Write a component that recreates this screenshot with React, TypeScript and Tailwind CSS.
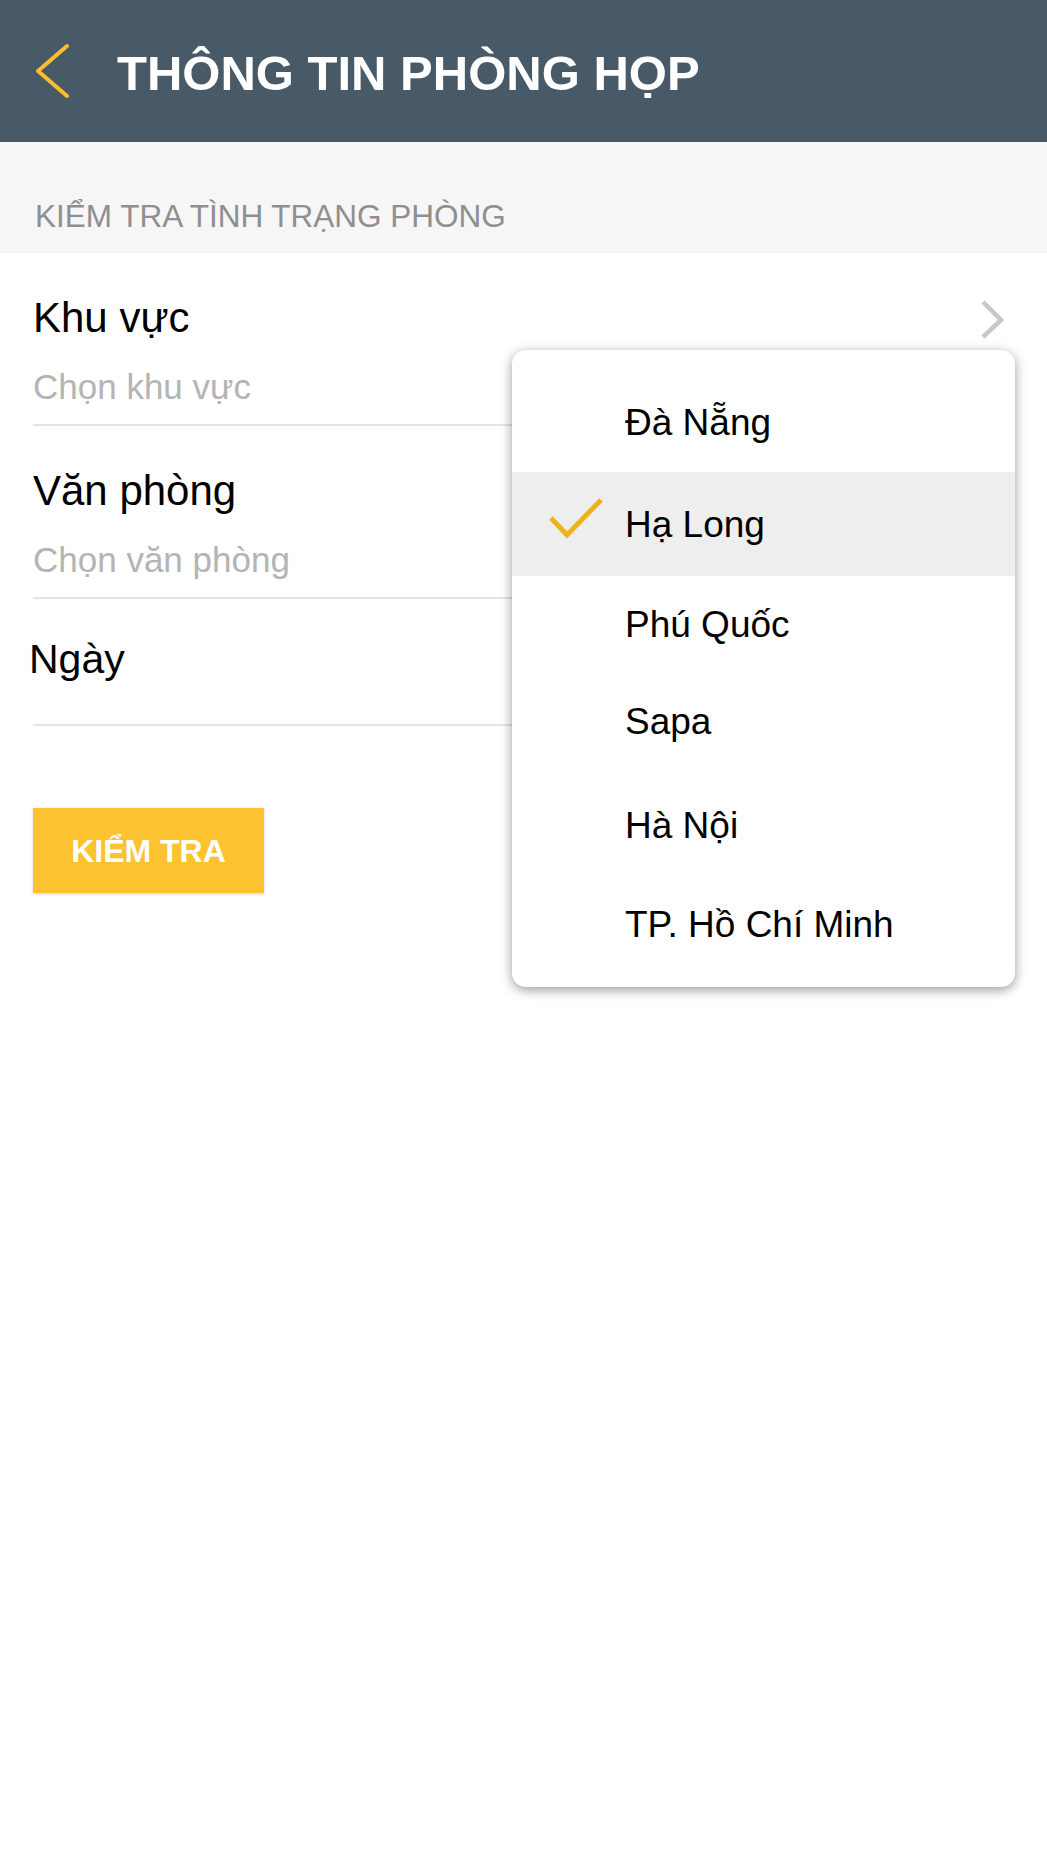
import React from 'react';

const cities = ['Đà Nẵng', 'Hạ Long', 'Phú Quốc', 'Sapa', 'Hà Nội', 'TP. Hồ Chí Minh'];
// row heights measured from the screen, the selected one is a bit taller
const rowHeights = ['h-[100px]', 'h-[104px]', 'h-[96px]', 'h-[98px]', 'h-[110px]', 'h-[88px]'];

const ChevronRight = () => (
  <svg width="24" height="48" viewBox="0 0 24 48" className="mr-[10px] shrink-0">
    <polyline points="3,8 21,26 3,43" fill="none" stroke="#c7c7cc" strokeWidth="4.5" />
  </svg>
);

const Field = ({ label, placeholder }: { label: string; placeholder: string }) => (
  <div className="mx-[33px] pt-[41px] pb-[15px] border-b-2 border-[#e4e4e4] flex justify-between items-start">
    <div>
      <p className="text-[42px] leading-[48px] text-black">{label}</p>
      <p className="mt-[23px] text-[35px] leading-[44px] text-[#b4b4b4]">{placeholder}</p>
    </div>
    <ChevronRight />
  </div>
);

const App = () => {
  const selected = 1;

  return (
    <div className="relative min-h-[1856px] bg-white font-['Liberation_Sans',Arial,sans-serif]">
      {/* Header */}
      <header className="h-[142px] bg-[#485a68] flex items-center pl-[36px]">
        <svg width="34" height="56" viewBox="0 0 34 56" className="shrink-0">
          <polyline
            points="31,3 2,28 31,53"
            fill="none"
            stroke="#fcbf2c"
            strokeWidth="4"
            strokeLinecap="round"
            strokeLinejoin="round"
          />
        </svg>
        <h1 className="ml-[47px] mt-[5px] text-[49px] leading-none font-bold text-white">
          THÔNG TIN PHÒNG HỌP
        </h1>
      </header>

      {/* Section title */}
      <div className="h-[111px] bg-[#f6f6f6] flex items-end pl-[35px] pb-[19px]">
        <p className="text-[31.5px] leading-[36px] text-[#8f8f8f]">KIỂM TRA TÌNH TRẠNG PHÒNG</p>
      </div>

      {/* Form */}
      <Field label="Khu vực" placeholder="Chọn khu vực" />
      <Field label="Văn phòng" placeholder="Chọn văn phòng" />
      <div className="mx-[33px] pt-[36px] pb-[41px] border-b-2 border-[#e4e4e4]">
        <p className="-ml-[4px] text-[41px] leading-[48px] text-black">Ngày</p>
      </div>

      <button className="mt-[82px] ml-[33px] w-[231px] h-[85px] bg-[#fdc22f] shadow-[0_1px_3px_rgba(0,0,0,0.18)] flex items-center justify-center text-white text-[32px] leading-none font-bold">
        KIỂM TRA
      </button>

      {/* Dropdown menu */}
      <div className="absolute left-[512px] top-[350px] w-[503px] rounded-[14px] bg-white pt-[22px] pb-[19px] overflow-hidden shadow-[0_3px_12px_rgba(0,0,0,0.4)]">
        {cities.map((city, i) => (
          <div
            key={city}
            className={`${rowHeights[i]} flex items-center pl-[38px] ${i === selected ? 'bg-[#eeeeee]' : ''}`}
          >
            <div className="w-[75px] shrink-0 flex items-center">
              {i === selected && (
                <svg width="52" height="52" viewBox="0 0 52 52" className="overflow-visible">
                  <polyline points="1,20 17,37 51,2" fill="none" stroke="#efb21c" strokeWidth="5" />
                </svg>
              )}
            </div>
            <span className="text-[37px] leading-none text-black">{city}</span>
          </div>
        ))}
      </div>
    </div>
  );
};

export default App;
